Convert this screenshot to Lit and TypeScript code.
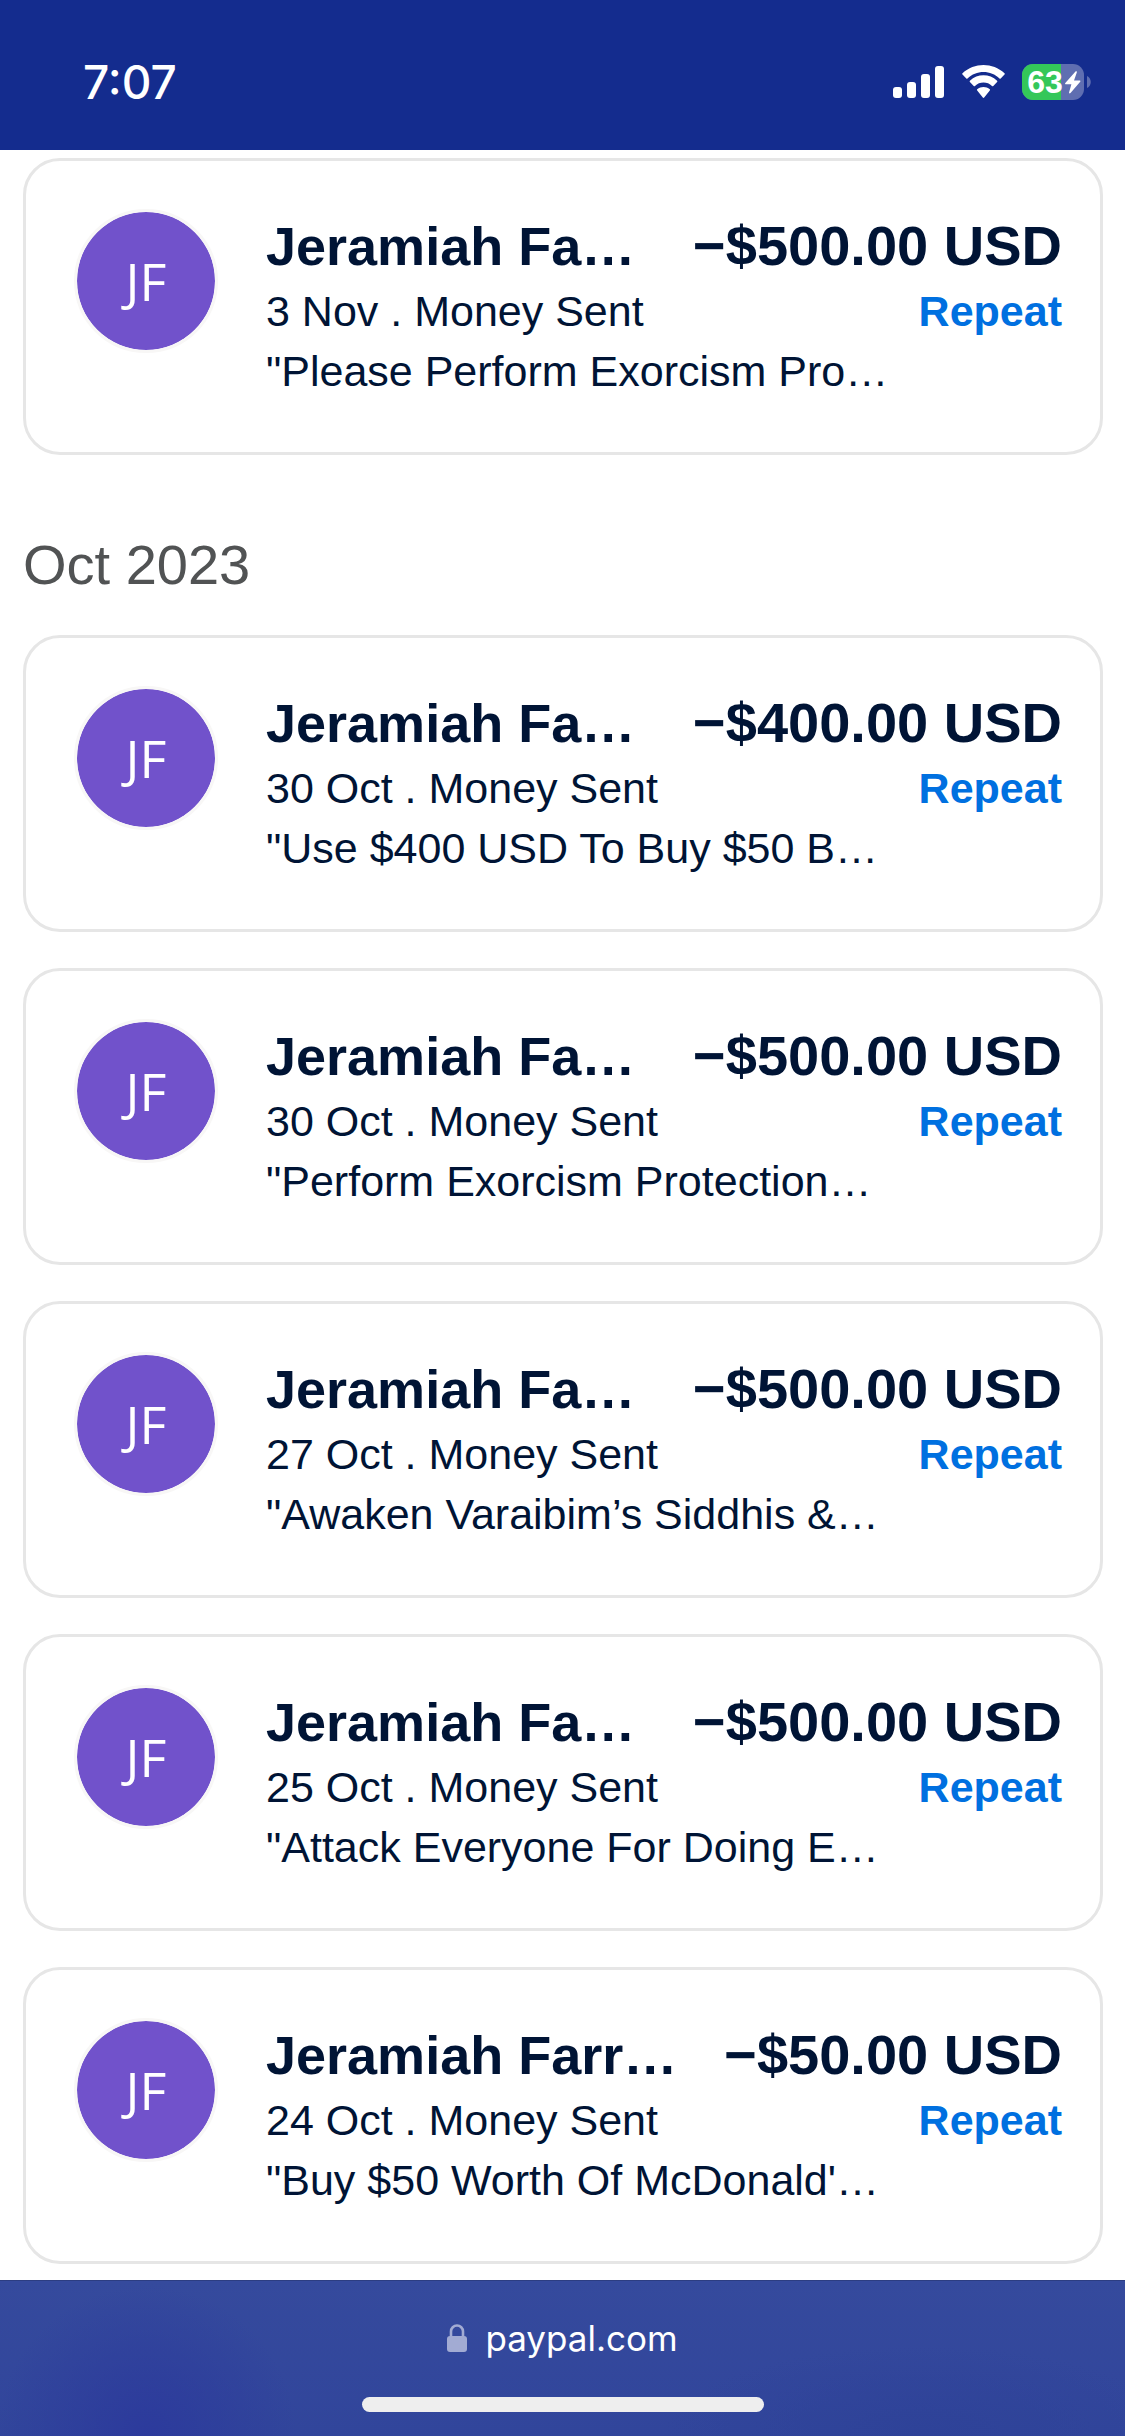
import { LitElement, html, css, svg } from "lit";
import { customElement, property } from "lit/decorators.js";

interface Payment {
  name: string;
  amount: string;
  date: string;
  note: string;
}

interface Month {
  label: string;
  payments: Payment[];
}

const months: Month[] = [
  {
    label: "",
    payments: [
      { name: "Jeramiah Fa…", amount: "−$500.00 USD", date: "3 Nov", note: "\"Please Perform Exorcism Pro…" },
    ],
  },
  {
    label: "Oct 2023",
    payments: [
      { name: "Jeramiah Fa…", amount: "−$400.00 USD", date: "30 Oct", note: "\"Use $400 USD To Buy $50 B…" },
      { name: "Jeramiah Fa…", amount: "−$500.00 USD", date: "30 Oct", note: "\"Perform Exorcism Protection…" },
      { name: "Jeramiah Fa…", amount: "−$500.00 USD", date: "27 Oct", note: "\"Awaken Varaibim’s Siddhis &…" },
      { name: "Jeramiah Fa…", amount: "−$500.00 USD", date: "25 Oct", note: "\"Attack Everyone For Doing E…" },
      { name: "Jeramiah Farr…", amount: "−$50.00 USD", date: "24 Oct", note: "\"Buy $50 Worth Of McDonald'…" },
    ],
  },
];

@customElement("status-bar")
export class StatusBar extends LitElement {
  static styles = css`
    :host {
      display: block;
      background: #142c8e;
      color: #fff;
      font-family: Inter, "Liberation Sans", sans-serif;
    }
    .bar {
      display: flex;
      align-items: center;
      justify-content: space-between;
      box-sizing: border-box;
      height: 150px;
      padding: 14px 34px 0 83px;
    }
    .time {
      font-size: 46px;
      font-weight: 500;
      line-height: 56px;
    }
    .icons {
      display: flex;
      gap: 16px;
    }
    .icons svg {
      display: block;
    }
    .level {
      font-family: "Liberation Sans", Arial, sans-serif;
      font-size: 32px;
      font-weight: 700;
    }
  `;

  render() {
    return html`
      <div class="bar">
        <span class="time">7:07</span>
        <div class="icons">
          <svg width="52" height="36" viewBox="0 0 52 36" fill="#fff" aria-hidden="true">
            ${[
              [0, 23],
              [14, 18],
              [28, 10],
              [42, 2],
            ].map(([x, y]) => svg`<rect x=${x} y=${y} width="9" height=${34 - y} rx="3" />`)}
          </svg>
          <svg width="45" height="36" viewBox="0 0 45 36" fill="#fff" aria-hidden="true">
            <path
              d="M22.500 8c6 0 11.700 2.300 16 6.400.4.400.9.400 1.200 0l3.800-3.800c.4-.4.400-1 0-1.400C31.800-1.800 13.200-1.800 1.500 9.200c-.4.400-.4 1 0 1.400l3.800 3.800c.3.400.8.400 1.200 0C10.800 10.300 16.500 8 22.500 8Z"
            />
            <path
              d="M22.500 18.600c3.200 0 6.200 1.200 8.500 3.300.4.400.9.400 1.300 0l3.800-3.800c.4-.4.400-1 0-1.400-7.600-7.200-19.600-7.200-27.200 0-.4.400-.4 1 0 1.400l3.800 3.800c.4.400.9.400 1.300 0 2.300-2.100 5.300-3.300 8.500-3.300Z"
            />
            <path
              d="M28.800 26.600c.4-.4.400-1 0-1.300-3.600-3.200-9-3.200-12.600 0-.4.300-.4.900 0 1.300l5.600 6.900c.4.500 1 .5 1.400 0Z"
            />
          </svg>
          <svg width="69" height="36" viewBox="0 0 69 36" role="img" aria-label="Battery">
            <clipPath id="cell"><rect width="62" height="36" rx="11" /></clipPath>
            <g clip-path="url(#cell)">
              <rect width="62" height="36" fill="#5f6eb1" />
              <rect width="39" height="36" fill="#34c759" />
            </g>
            <path d="M65 12c5 2 5 10 0 12Z" fill="#5f6eb1" />
            <text class="level" x="23" y="29" text-anchor="middle" fill="#fff">63</text>
            <path
              d="M53.500 7.500 43.300 19c-.5.600-.2 1.300.6 1.300h5.500l-2.300 8c-.3 1.100.7 1.500 1.400.7l9.700-11.300c.5-.6.2-1.300-.6-1.300H52l2.800-7.900c.4-1.200-.6-1.800-1.300-1Z"
              fill="#fff"
            />
          </svg>
        </div>
      </div>
    `;
  }
}

@customElement("payment-card")
export class PaymentCard extends LitElement {
  @property({ attribute: false }) payment!: Payment;

  static styles = css`
    :host {
      display: block;
      color: #001435;
      background: #fff;
      border: 3px solid #e6e6e6;
      border-radius: 37px;
    }
    .card {
      display: flex;
      gap: 48px;
      padding: 48px 38px 51px 48px;
    }
    .avatar {
      display: flex;
      align-items: center;
      justify-content: center;
      box-sizing: border-box;
      flex: none;
      width: 144px;
      height: 144px;
      border: 3px solid #f8f7f6;
      border-radius: 50%;
      background: #7152cb;
      background-clip: padding-box;
      color: #fff;
      font-family: "Open Sans", "Noto Sans", sans-serif;
      font-size: 52px;
      line-height: 72px;
    }
    .body {
      display: grid;
      grid-template-rows: 68px 60px 60px;
      flex: 1;
      min-width: 0;
      padding-top: 4px;
    }
    .row {
      display: flex;
      align-items: baseline;
      justify-content: space-between;
      gap: 24px;
      white-space: nowrap;
    }
    .name,
    .amount {
      margin: 0;
      font-weight: 700;
      line-height: 66px;
    }
    .name {
      font-size: 54px;
    }
    .amount {
      font-size: 56px;
    }
    .detail,
    .note {
      margin: 0;
      font-size: 43px;
      line-height: 60px;
    }
    .repeat {
      padding: 0;
      border: 0;
      background: none;
      color: #0070e0;
      font: inherit;
      font-size: 43px;
      font-weight: 700;
      line-height: 60px;
    }
  `;

  render() {
    const p = this.payment;
    return html`
      <article class="card">
        <div class="avatar">JF</div>
        <div class="body">
          <div class="row">
            <h3 class="name">${p.name}</h3>
            <span class="amount">${p.amount}</span>
          </div>
          <div class="row">
            <p class="detail">${p.date} . Money Sent</p>
            <button class="repeat" type="button">Repeat</button>
          </div>
          <p class="note">${p.note}</p>
        </div>
      </article>
    `;
  }
}

@customElement("address-bar")
export class AddressBar extends LitElement {
  static styles = css`
    :host {
      display: block;
      background:
        radial-gradient(ellipse 150px 150px at 13% 100%, #2c3a9c, transparent),
        radial-gradient(ellipse 260px 90px at 82% 100%, #2e4298, transparent),
        linear-gradient(#354a9d, #31459b);
      box-shadow: inset 0 1px #2c3d82;
      color: #fff;
      font-family: Inter, "Liberation Sans", sans-serif;
    }
    .bar {
      display: flex;
      flex-direction: column;
      align-items: center;
      justify-content: space-between;
      box-sizing: border-box;
      height: 156px;
      padding: 35px 0 24px;
    }
    .address {
      display: flex;
      align-items: center;
      gap: 18px;
      color: inherit;
      font-size: 35px;
      line-height: 46px;
      text-decoration: none;
    }
    .home {
      width: 402px;
      height: 15px;
      border-radius: 8px;
      background: #eee;
    }
  `;

  render() {
    return html`
      <div class="bar">
        <a class="address" href="#">
          <svg width="20" height="28" viewBox="0 0 20 28" aria-hidden="true">
            <path d="M4 13V7.500a6 6 0 0 1 12 0V13" fill="none" stroke="#a2abd3" stroke-width="2.600" />
            <rect y="12" width="20" height="16" rx="3" fill="#a2abd3" />
          </svg>
          <span>paypal.com</span>
        </a>
        <div class="home"></div>
      </div>
    `;
  }
}

@customElement("app-root")
export class AppRoot extends LitElement {
  static styles = css`
    :host {
      display: flex;
      flex-direction: column;
      min-height: 100vh;
      background: #fff;
      font-family: "Liberation Sans", Arial, sans-serif;
    }
    .activity {
      display: flex;
      flex: 1;
      flex-direction: column;
      gap: 76px;
      padding: 8px 22px 16px 23px;
    }
    .month {
      display: flex;
      flex-direction: column;
      gap: 36px;
    }
    .label {
      margin: 0;
      color: #515354;
      font-size: 56px;
      font-weight: 400;
      line-height: 68px;
    }
  `;

  render() {
    return html`
      <status-bar></status-bar>
      <main class="activity">
        ${months.map(
          (m) => html`
            <section class="month">
              ${m.label ? html`<h2 class="label">${m.label}</h2>` : null}
              ${m.payments.map((p) => html`<payment-card .payment=${p}></payment-card>`)}
            </section>
          `,
        )}
      </main>
      <address-bar></address-bar>
    `;
  }
}
